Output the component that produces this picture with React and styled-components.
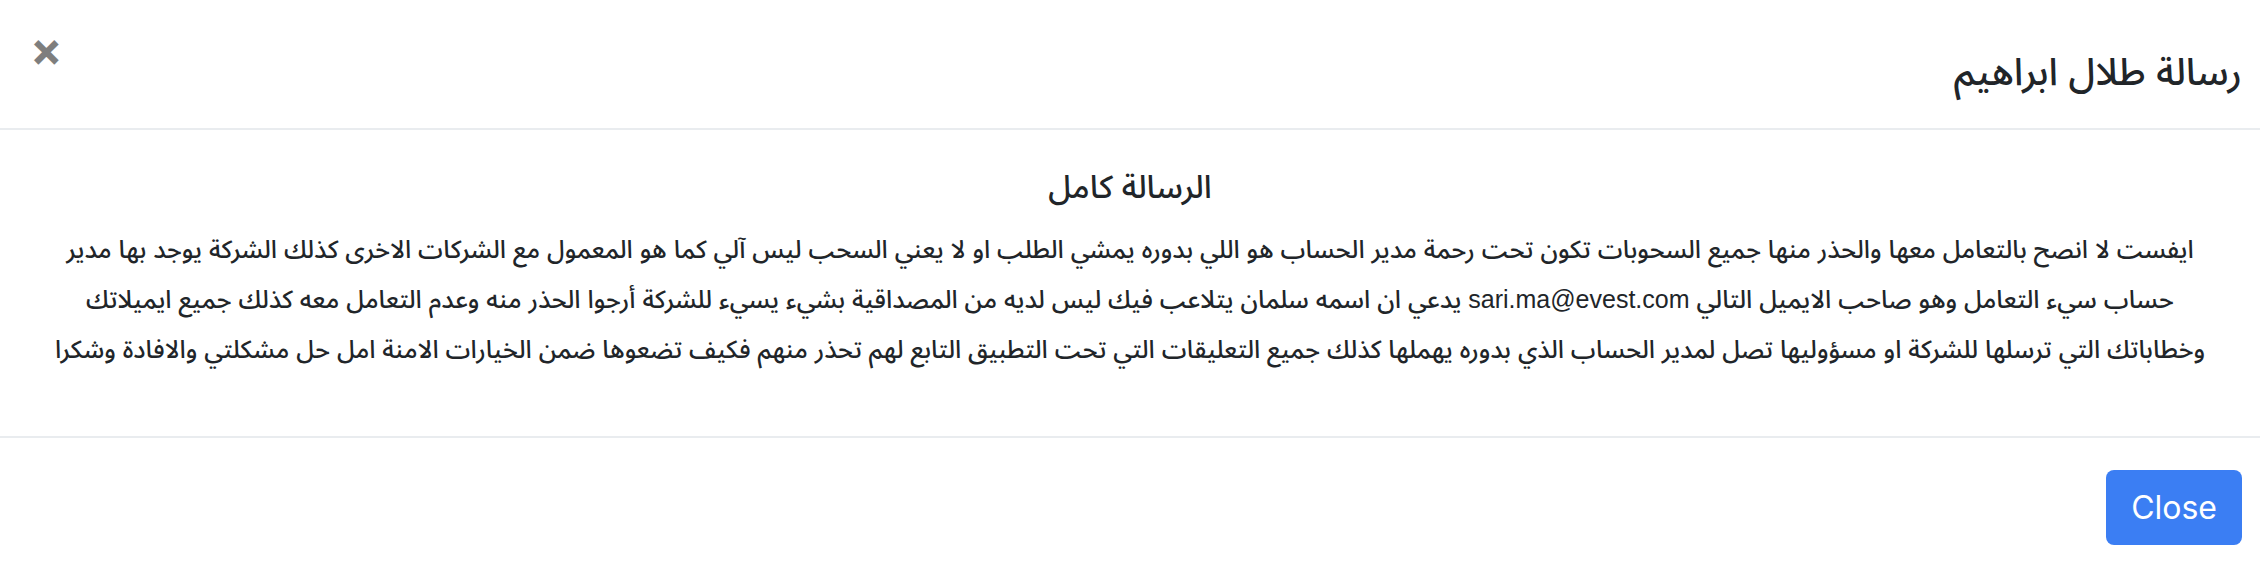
import React from 'react';
import styled, { createGlobalStyle } from 'styled-components';

const GlobalStyle = createGlobalStyle`
  *, *::before, *::after { box-sizing: border-box; }
  html, body {
    margin: 0;
    padding: 0;
    background: #fff;
  }
  body {
    font-family: "Liberation Sans", "Noto Sans Arabic", sans-serif;
    color: #212529;
  }
`;

const Modal = styled.div`
  width: 2260px;
  height: 564px;
  background: #fff;
  display: flex;
  flex-direction: column;
  direction: rtl;
  overflow: hidden;
`;

const Header = styled.div`
  display: flex;
  align-items: flex-start;
  justify-content: space-between;
  height: 130px;
  padding: 25px 18px 0 30px;
  border-bottom: 2px solid #e9ecef;
`;

const Title = styled.h4`
  margin: 17px 0 0;
  font-size: 38px;
  font-weight: 500;
  line-height: 60px;
  color: #212529;
`;

const CloseX = styled.button`
  border: 0;
  background: transparent;
  padding: 0;
  margin: 0;
  font-family: Inter, "DejaVu Sans", sans-serif;
  font-size: 48px;
  font-weight: 700;
  line-height: 1;
  color: #000;
  opacity: 0.5;
  cursor: pointer;
`;

const Body = styled.div`
  height: 306px;
  padding: 33px 32px 0;
  text-align: center;
`;

const Heading = styled.h5`
  margin: 0 0 13px;
  font-size: 32px;
  font-weight: 500;
  line-height: 48px;
  color: #212529;
`;

const Line = styled.p`
  margin: 0;
  font-size: 25px;
  font-weight: 500;
  line-height: 50px;
  white-space: nowrap;
`;

const Footer = styled.div`
  display: flex;
  justify-content: flex-start;
  padding: 32px 18px 0;
  border-top: 2px solid #e9ecef;
`;

const PrimaryButton = styled.button`
  border: 0;
  border-radius: 8px;
  background: #3b7ef3;
  color: #fff;
  font-family: Inter, "Liberation Sans", sans-serif;
  font-size: 32px;
  line-height: 48px;
  height: 75px;
  padding: 0 25px;
  cursor: pointer;
`;

const lines = [
  'ايفست لا انصح بالتعامل معها والحذر منها جميع السحوبات تكون تحت رحمة مدير الحساب هو اللي بدوره يمشي الطلب او لا يعني السحب ليس آلي كما هو المعمول مع الشركات الاخرى كذلك الشركة يوجد بها مدير',
  'حساب سيء التعامل وهو صاحب الايميل التالي sari.ma@evest.com يدعي ان اسمه سلمان يتلاعب فيك ليس لديه من المصداقية بشيء يسيء للشركة أرجوا الحذر منه وعدم التعامل معه كذلك جميع ايميلاتك',
  'وخطاباتك التي ترسلها للشركة او مسؤوليها تصل لمدير الحساب الذي بدوره يهملها كذلك جميع التعليقات التي تحت التطبيق التابع لهم تحذر منهم فكيف تضعوها ضمن الخيارات الامنة امل حل مشكلتي والافادة وشكرا',
];

const App = () => (
  <>
    <GlobalStyle />
    <Modal>
      <Header>
        <Title>رسالة طلال ابراهيم</Title>
        <CloseX aria-label="Close">×</CloseX>
      </Header>
      <Body>
        <Heading>الرسالة كامل</Heading>
        {lines.map((text, i) => (
          <Line key={i}>{text}</Line>
        ))}
      </Body>
      <Footer>
        <PrimaryButton>Close</PrimaryButton>
      </Footer>
    </Modal>
  </>
);

export default App;
